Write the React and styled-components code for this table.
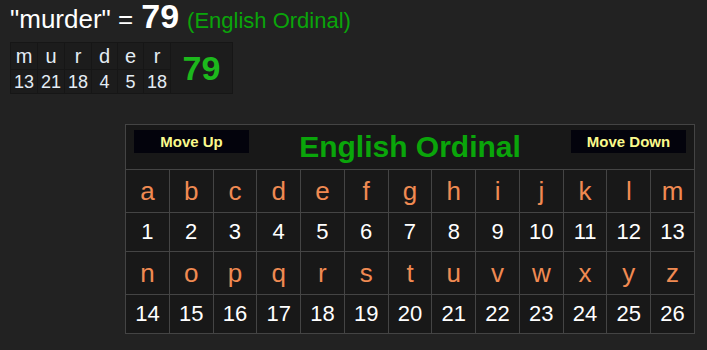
import React from "react";
import styled, { createGlobalStyle } from "styled-components";

const GlobalStyle = createGlobalStyle`
  html, body {
    margin: 0;
    padding: 0;
    background: #222222;
  }
  body {
    font-family: "Liberation Sans", Arial, sans-serif;
    color: #ffffff;
  }
`;

const Page = styled.div`
  width: 707px;
  height: 350px;
  padding: 0 10px;
  box-sizing: border-box;
  background: #222222;
  overflow: hidden;
`;

const Heading = styled.div`
  display: flex;
  align-items: baseline;
  gap: 8px;
  height: 32px;
  white-space: nowrap;
`;

const Word = styled.span`
  font-size: 26px;
  color: #ffffff;
`;

const Sum = styled.span`
  font-size: 34px;
  line-height: 32px;
  font-weight: bold;
  color: #ffffff;
`;

const CipherName = styled.span`
  font-size: 22px;
  color: #0aa50a;
`;

const Breakdown = styled.div`
  display: inline-grid;
  grid-template-columns: 26px 26px 26px 25px 25px 26px 61px;
  grid-template-rows: 26px 23px;
  margin-top: 10px;
  background: #161616;
  border: 1px solid #161616;
  gap: 1px;
`;

const BreakCell = styled.div`
  display: flex;
  align-items: center;
  justify-content: center;
  background: #1c1c1c;
  color: #e4ecf4;
  font-size: ${(p) => (p.$num ? "18px" : "20px")};
  line-height: 1;
`;

const BreakTotal = styled.div`
  grid-column: 7;
  grid-row: 1 / span 2;
  display: flex;
  align-items: center;
  justify-content: center;
  background: #1c1c1c;
  color: #1cb81c;
  font-size: 34px;
  font-weight: bold;
`;

const Cipher = styled.div`
  display: grid;
  grid-template-columns: repeat(13, 1fr);
  grid-template-rows: 44px 42px 38px 42px 38px;
  width: 570px;
  box-sizing: border-box;
  margin: 30px 0 0 115px;
  padding: 1px;
  gap: 1px;
  background: #444444;
`;

const Header = styled.div`
  grid-column: 1 / -1;
  display: flex;
  align-items: flex-start;
  justify-content: space-between;
  padding: 5px 8px 0;
  background: #181818;
`;

const MoveButton = styled.button`
  width: 115px;
  height: 23px;
  padding: 0;
  border: none;
  background: #03030c;
  color: #fafa8c;
  font-family: "Liberation Sans", Arial, sans-serif;
  font-size: 15px;
  font-weight: bold;
  cursor: pointer;
`;

const Title = styled.div`
  color: #0aa50a;
  font-size: 30px;
  font-weight: bold;
  line-height: 34px;
`;

const Cell = styled.div`
  display: flex;
  align-items: center;
  justify-content: center;
  background: #181818;
  color: ${(p) => (p.$num ? "#ffffff" : "#f08a52")};
  font-size: ${(p) => (p.$num ? "22px" : "26px")};
  line-height: 1;
`;

const word = "murder";
const value = (c) => c.charCodeAt(0) - 96;
const alphabet = "abcdefghijklmnopqrstuvwxyz".split("");

export default function App() {
  const total = word.split("").reduce((s, c) => s + value(c), 0);
  const halves = [alphabet.slice(0, 13), alphabet.slice(13)];

  return (
    <Page>
      <GlobalStyle />
      <Heading>
        <Word>"{word}" =</Word>
        <Sum>{total}</Sum>
        <CipherName>(English Ordinal)</CipherName>
      </Heading>

      <Breakdown>
        {word.split("").map((c, i) => (
          <BreakCell key={"l" + i} style={{ gridRow: 1, gridColumn: i + 1 }}>
            {c}
          </BreakCell>
        ))}
        {word.split("").map((c, i) => (
          <BreakCell $num key={"n" + i} style={{ gridRow: 2, gridColumn: i + 1 }}>
            {value(c)}
          </BreakCell>
        ))}
        <BreakTotal>{total}</BreakTotal>
      </Breakdown>

      <Cipher>
        <Header>
          <MoveButton>Move Up</MoveButton>
          <Title>English Ordinal</Title>
          <MoveButton>Move Down</MoveButton>
        </Header>
        {halves.map((row, r) => (
          <React.Fragment key={r}>
            {row.map((c) => (
              <Cell key={c}>{c}</Cell>
            ))}
            {row.map((c) => (
              <Cell $num key={c + "n"}>
                {value(c)}
              </Cell>
            ))}
          </React.Fragment>
        ))}
      </Cipher>
    </Page>
  );
}
